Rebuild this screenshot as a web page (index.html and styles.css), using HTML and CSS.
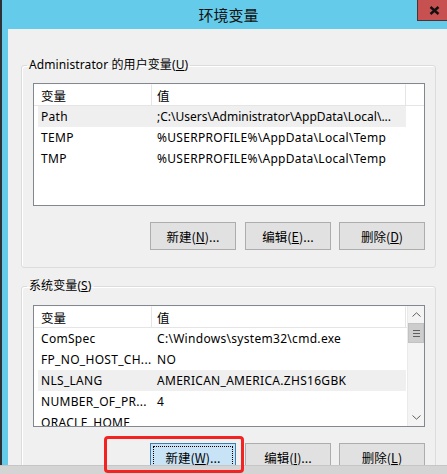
FILE: index.html
```html
<!DOCTYPE html>
<html lang="zh-CN">
<head>
<meta charset="utf-8">
<title>环境变量</title>
<link rel="stylesheet" href="styles.css">
</head>
<body>
<div class="screen">
  <div class="window">
    <div class="titlebar">
      <span class="title">环境变量</span>
      <div class="close">
        <svg width="11" height="9" viewBox="0 0 11 9"><path d="M1.5 1 L9.5 8 M9.5 1 L1.5 8" stroke="#111" stroke-width="2.4" fill="none"/></svg>
      </div>
    </div>
    <div class="content">
      <fieldset class="group group-user">
        <legend>Administrator 的用户变量(<u>U</u>)</legend>
        <div class="listbox">
          <div class="list-head">
            <div class="hcell h1">变量</div>
            <div class="hcell h2">值</div>
            <div class="hcell hfill"></div>
          </div>
          <div class="list-body">
            <div class="row hot"><div class="c1">Path</div><div class="c2 tight">;C:\Users\Administrator\AppData\Local\...</div></div>
            <div class="row"><div class="c1">TEMP</div><div class="c2">%USERPROFILE%\AppData\Local\Temp</div></div>
            <div class="row"><div class="c1">TMP</div><div class="c2">%USERPROFILE%\AppData\Local\Temp</div></div>
          </div>
        </div>
        <div class="buttons">
          <div class="btn">新建(<u>N</u>)...</div>
          <div class="btn">编辑(<u>E</u>)...</div>
          <div class="btn">删除(<u>D</u>)</div>
        </div>
      </fieldset>
      <fieldset class="group group-sys">
        <legend>系统变量(<u>S</u>)</legend>
        <div class="listbox sys">
          <div class="list-main">
            <div class="list-head">
              <div class="hcell h1">变量</div>
              <div class="hcell h2">值</div>
            </div>
            <div class="list-body">
              <div class="row"><div class="c1">ComSpec</div><div class="c2">C:\Windows\system32\cmd.exe</div></div>
              <div class="row"><div class="c1">FP_NO_HOST_CH...</div><div class="c2">NO</div></div>
              <div class="row hot"><div class="c1">NLS_LANG</div><div class="c2">AMERICAN_AMERICA.ZHS16GBK</div></div>
              <div class="row"><div class="c1">NUMBER_OF_PR...</div><div class="c2">4</div></div>
              <div class="row"><div class="c1">ORACLE_HOME</div><div class="c2"></div></div>
            </div>
          </div>
          <div class="scrollbar">
            <div class="sb-btn"><svg width="9" height="5" viewBox="0 0 9 5"><path d="M0.5 4.5 L4.5 0.8 L8.5 4.5" stroke="#606060" stroke-width="1" fill="none"/></svg></div>
            <div class="sb-thumb"><span></span><span></span><span></span></div>
            <div class="sb-track"></div>
            <div class="sb-btn"><svg width="9" height="5" viewBox="0 0 9 5"><path d="M0.5 0.5 L4.5 4.2 L8.5 0.5" stroke="#606060" stroke-width="1" fill="none"/></svg></div>
          </div>
        </div>
        <div class="buttons">
          <div class="btn focused">新建(<u>W</u>)...</div>
          <div class="btn">编辑(<u>I</u>)...</div>
          <div class="btn">删除(<u>L</u>)</div>
        </div>
      </fieldset>
    </div>
  </div>
  <div class="taskbar"></div>
  <div class="annot"></div>
</div>
</body>
</html>
```
FILE: styles.css
```css
* { box-sizing: border-box; }
html, body { margin: 0; padding: 0; }
body {
  width: 447px;
  height: 474px;
  overflow: hidden;
  font-family: "Noto Sans", "Noto Sans CJK SC", sans-serif;
  font-size: 12px;
  color: #000;
  background: #d6d6d6;
}
.screen { position: relative; width: 447px; height: 474px; }
.window {
  height: 465px;
  background: #65cbea;
  border-left: 2px solid #2e3236;
  display: flex;
  flex-direction: column;
}
.titlebar {
  height: 29px;
  display: flex;
  align-items: flex-start;
  flex-shrink: 0;
}
.title {
  flex: 1;
  text-align: center;
  padding-left: 38px;
  font-family: "Noto Sans CJK SC", sans-serif;
  font-size: 15px;
  line-height: 29px;
  color: #111;
}
.close {
  width: 30px;
  height: 21px;
  background: #c75050;
  border-left: 1px solid #4a3434;
  border-bottom: 1px solid #4a3434;
  display: flex;
  align-items: center;
  padding-left: 11px;
}
.close svg { display: block; }
.content {
  flex: 1;
  margin-left: 6px;
  background: #f0f0f0;
  padding: 28px 11px 0 13px;
  overflow: hidden;
}
.group {
  margin: 0;
  border: 1px solid #dcdcdc;
  border-radius: 3px;
  padding: 0 10px 17px 11px;
  box-shadow: inset 1px 1px 0 #fff;
}
.group legend {
  margin-left: -6px;
  padding: 0 2px;
  line-height: 16px;
  letter-spacing: 0.1px;
  font-family: "Noto Sans", "Noto Sans CJK SC", sans-serif;
}
.group-sys { margin-top: 10px; }
.listbox {
  margin-top: 10px;
  height: 123px;
  border: 1px solid #828790;
  background: #fff;
  overflow: hidden;
}
.listbox.sys { margin-top: 11px; height: 122px; display: flex; }
.list-main { flex: 1; overflow: hidden; }
.list-head {
  display: flex;
  height: 22px;
  border-bottom: 1px solid #e5e5e5;
  background: #fff;
}
.hcell {
  line-height: 21px;
  border-right: 1px solid #e5e5e5;
  border-top: 1px solid #fcfcfc;
  font-family: "Noto Sans CJK SC", sans-serif;
  font-size: 12.5px;
}
.h1 { width: 118px; padding-left: 7px; }
.h2 { width: 254px; padding-left: 5px; }
.hfill { flex: 1; border-right: none; }
.row {
  display: flex;
  height: 21px;
  line-height: 22px;
  margin-left: 4px;
  width: 368px;
  white-space: nowrap;
  letter-spacing: 0.3px;
}
.row.hot { background: #efefef; }
.c1 { width: 113px; padding-left: 3px; overflow: hidden; }
.c2 { flex: 1; padding-left: 6px; overflow: hidden; }
.c2.tight { letter-spacing: 0; }
.scrollbar {
  width: 17px;
  display: flex;
  flex-direction: column;
  background: #f4f4f4;
  border-left: 1px solid #eaeaea;
}
.sb-btn {
  height: 17px;
  display: flex;
  align-items: center;
  justify-content: center;
  background: #f4f4f4;
}
.sb-thumb {
  height: 20px;
  background: #cdcdcd;
  border: 1px solid #c2c2c2;
  display: flex;
  flex-direction: column;
  align-items: center;
  justify-content: center;
  gap: 2px;
}
.sb-thumb span { display: block; width: 7px; height: 1px; background: #5e5e5e; }
.sb-track { flex: 1; background: #f4f4f4; }
.buttons {
  display: flex;
  justify-content: flex-end;
  margin-top: 16px;
}
.btn {
  width: 86px;
  height: 28px;
  margin-left: 8px;
  background: #e1e1e1;
  border: 1px solid #adadad;
  display: flex;
  align-items: center;
  justify-content: center;
  font-family: "Noto Sans CJK SC", sans-serif;
  font-size: 12.5px;
  color: #000;
}
.btn:nth-child(2) { margin-left: 9px; }
.btn.focused {
  background: #c8e3f6;
  border-color: #3c7fb1;
  outline: 1px dotted #000;
  outline-offset: -4px;
}
.taskbar {
  height: 9px;
  background: #d4d4d4;
  border-top: 1px solid #c6c6c6;
}
.annot {
  position: absolute;
  left: 104px;
  top: 436px;
  width: 140px;
  height: 37px;
  border: 3px solid #f52222;
  border-radius: 4px;
}
```
